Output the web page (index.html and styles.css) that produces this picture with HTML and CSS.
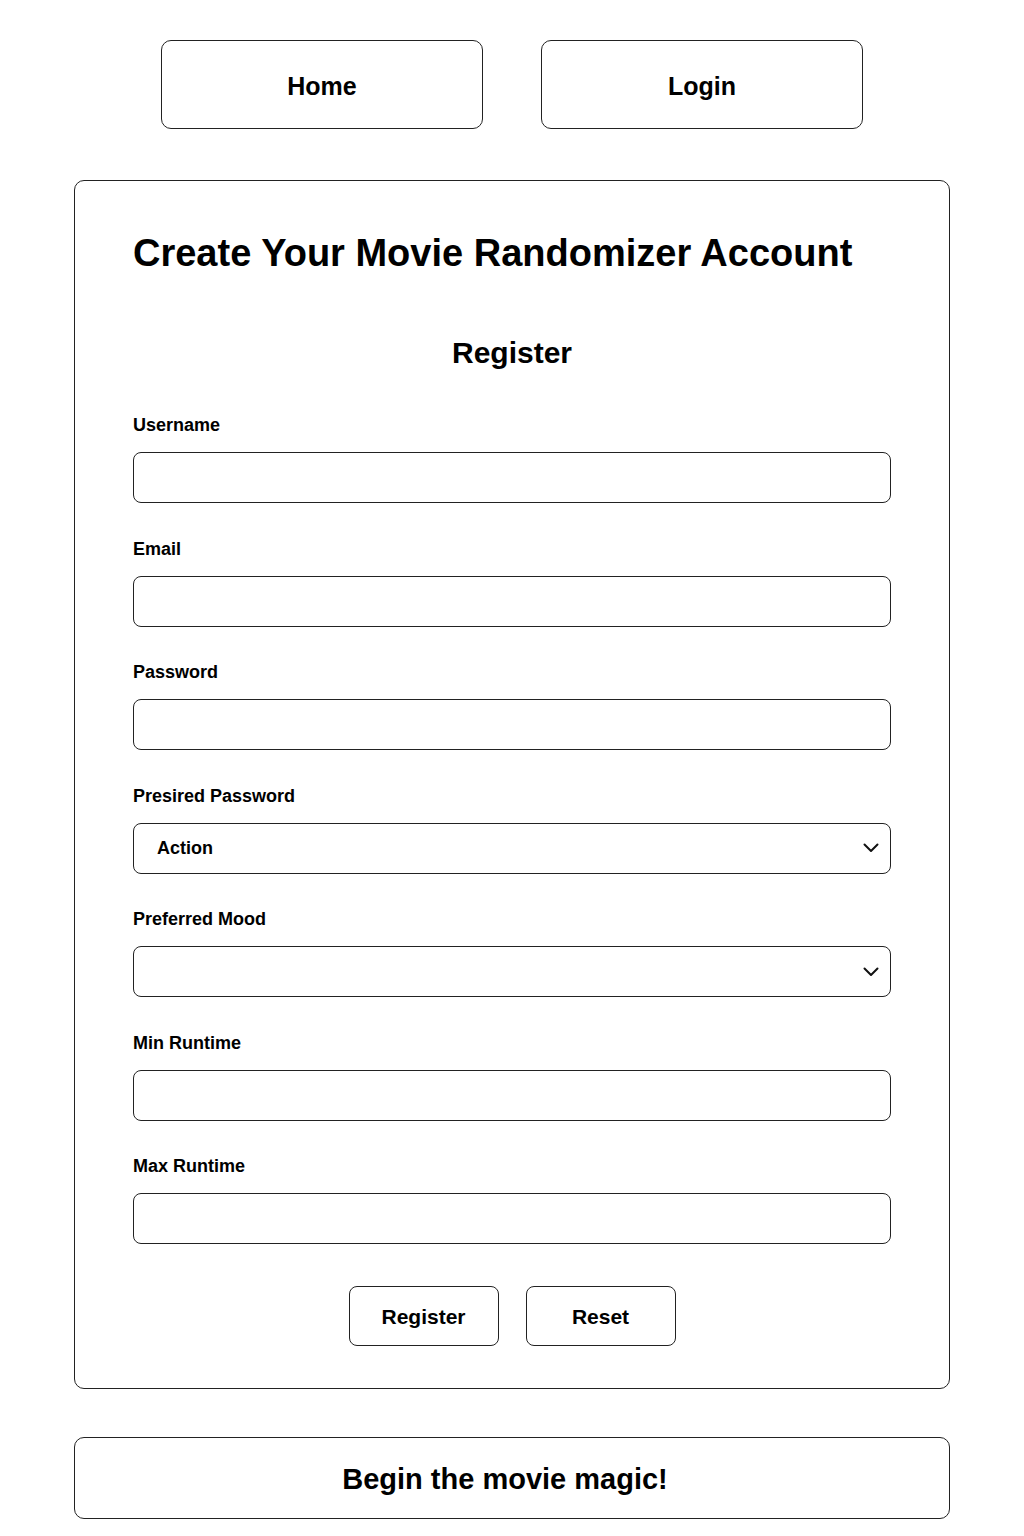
FILE: index.html
```html
<!DOCTYPE html>
<html lang="en">
<head>
<meta charset="utf-8">
<title>Register</title>
<link rel="stylesheet" href="styles.css">
</head>
<body>
  <nav class="nav">
    <a class="nav-btn" href="#">Home</a>
    <a class="nav-btn" href="#">Login</a>
  </nav>

  <main class="card">
    <h1 class="title">Create Your Movie Randomizer Account</h1>
    <h2 class="subtitle">Register</h2>
    <form class="form">
      <div class="field">
        <label class="label">Username</label>
        <div class="input"></div>
      </div>
      <div class="field">
        <label class="label">Email</label>
        <div class="input"></div>
      </div>
      <div class="field">
        <label class="label">Password</label>
        <div class="input"></div>
      </div>
      <div class="field">
        <label class="label">Presired Password</label>
        <div class="input select">
          <span class="select-value">Action</span>
          <svg class="chevron" width="16" height="10" viewBox="0 0 16 10"><path d="M1.5 1.5 L8 8 L14.5 1.5" fill="none" stroke="#111" stroke-width="2" stroke-linecap="round" stroke-linejoin="round"/></svg>
        </div>
      </div>
      <div class="field">
        <label class="label">Preferred Mood</label>
        <div class="input select">
          <span class="select-value"></span>
          <svg class="chevron" width="16" height="10" viewBox="0 0 16 10"><path d="M1.5 1.5 L8 8 L14.5 1.5" fill="none" stroke="#111" stroke-width="2" stroke-linecap="round" stroke-linejoin="round"/></svg>
        </div>
      </div>
      <div class="field">
        <label class="label">Min Runtime</label>
        <div class="input"></div>
      </div>
      <div class="field">
        <label class="label">Max Runtime</label>
        <div class="input"></div>
      </div>
      <div class="actions">
        <button type="button" class="btn">Register</button>
        <button type="button" class="btn">Reset</button>
      </div>
    </form>
  </main>

  <footer class="footer">Begin the movie magic!</footer>
</body>
</html>
```

FILE: styles.css
```css
* { box-sizing: border-box; }

html, body {
  margin: 0;
  padding: 0;
  background: #fff;
}

body {
  font-family: "Liberation Sans", Arial, sans-serif;
  color: #000;
  padding-top: 40px;
  padding-bottom: 17px;
}

.nav {
  display: flex;
  justify-content: center;
  gap: 58px;
}

.nav-btn {
  width: 322px;
  height: 89px;
  border: 1px solid #222;
  border-radius: 10px;
  display: flex;
  align-items: center;
  justify-content: center;
  padding-top: 3px;
  font-size: 25px;
  font-weight: 700;
  color: #000;
  text-decoration: none;
}

.card {
  width: 876px;
  margin: 51px auto 0;
  border: 1px solid #222;
  border-radius: 10px;
  padding: 50px 58px 42px;
}

.title {
  margin: 0;
  font-size: 38px;
  line-height: 44px;
  font-weight: 700;
}

.subtitle {
  margin: 60px 0 0;
  font-size: 30px;
  line-height: 36px;
  font-weight: 700;
  text-align: center;
}

.form {
  margin-top: 43px;
}

.field {
  margin-bottom: 34.5px;
}

.label {
  display: block;
  font-size: 18px;
  line-height: 22px;
  font-weight: 700;
  margin-bottom: 16px;
}

.input {
  height: 51px;
  border: 1px solid #222;
  border-radius: 8px;
  background: #fff;
}

.select {
  display: flex;
  align-items: center;
  justify-content: space-between;
  padding: 0 11px 0 23px;
}

.select-value {
  font-size: 18px;
  font-weight: 700;
}

.actions {
  display: flex;
  justify-content: center;
  gap: 27px;
  margin-top: 42px;
}

.field:last-of-type {
  margin-bottom: 0;
}

.btn {
  width: 150px;
  height: 60px;
  border: 1px solid #222;
  border-radius: 8px;
  background: #fff;
  font-family: "Liberation Sans", Arial, sans-serif;
  font-size: 21px;
  font-weight: 700;
  color: #000;
  padding-top: 3px;
}

.footer {
  width: 876px;
  height: 82px;
  margin: 48px auto 0;
  border: 1px solid #222;
  border-radius: 10px;
  display: flex;
  align-items: center;
  justify-content: center;
  font-size: 29px;
  font-weight: 700;
  padding-right: 14px;
  padding-top: 2px;
}
```
